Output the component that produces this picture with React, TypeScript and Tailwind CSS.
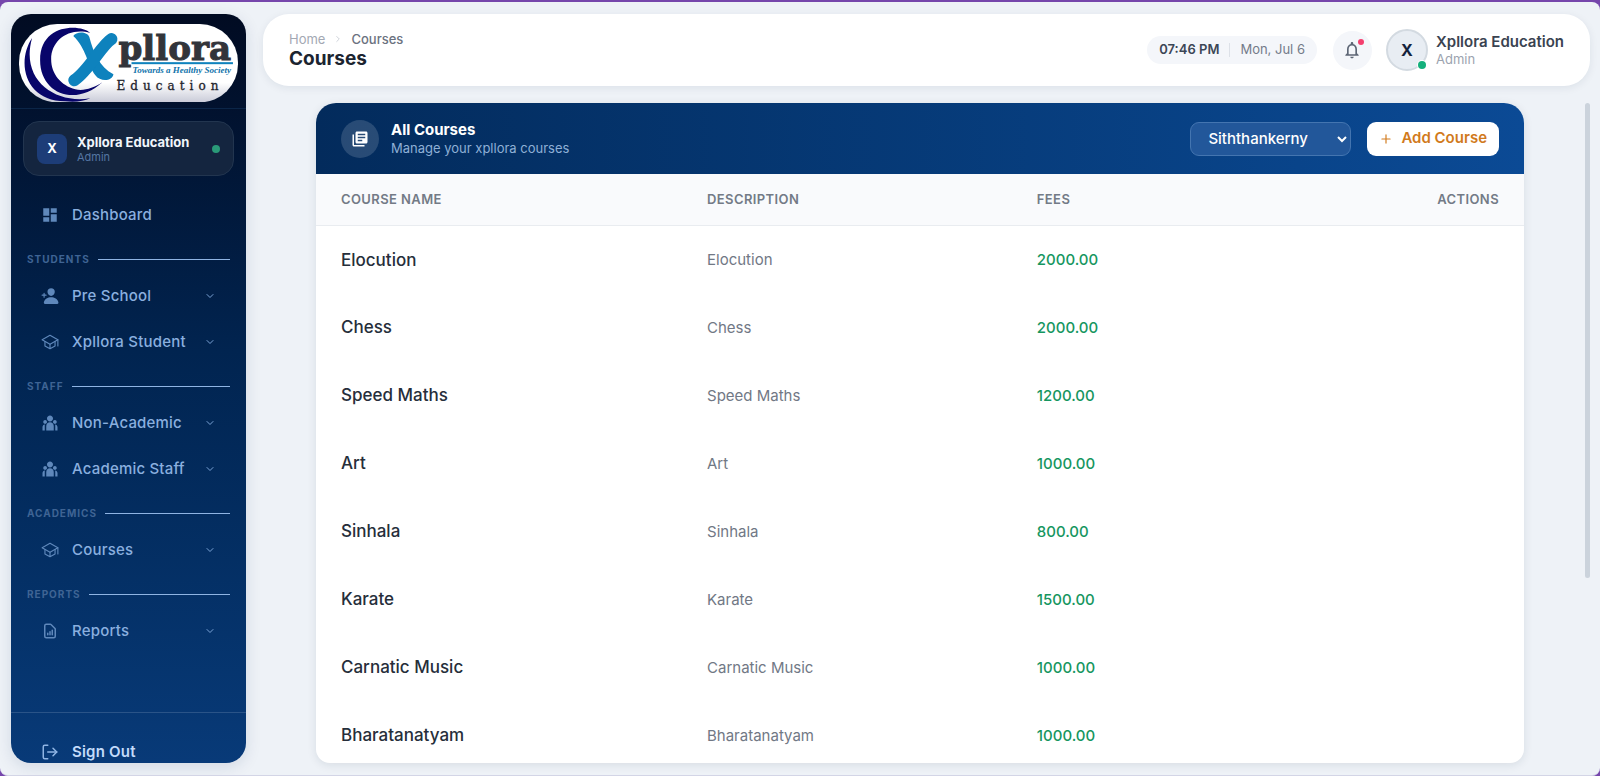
import type { ComponentType } from "react"
import { FiChevronDown, FiChevronRight, FiLogOut, FiPlus } from "react-icons/fi"
import { HiOutlineDocumentReport } from "react-icons/hi"
import { IoPersonAdd, IoSchoolOutline } from "react-icons/io5"
import { MdDashboard, MdLibraryBooks, MdNotificationsNone } from "react-icons/md"
import { RiTeamFill } from "react-icons/ri"

type NavItem = {
  label: string
  icon: ComponentType<{ className?: string }>
}

const navGroups: { title: string; items: NavItem[] }[] = [
  {
    title: "Students",
    items: [
      { label: "Pre School", icon: IoPersonAdd },
      { label: "Xpllora Student", icon: IoSchoolOutline },
    ],
  },
  {
    title: "Staff",
    items: [
      { label: "Non-Academic", icon: RiTeamFill },
      { label: "Academic Staff", icon: RiTeamFill },
    ],
  },
  { title: "Academics", items: [{ label: "Courses", icon: IoSchoolOutline }] },
  { title: "Reports", items: [{ label: "Reports", icon: HiOutlineDocumentReport }] },
]

const courses = [
  { name: "Elocution", description: "Elocution", fees: "2000.00" },
  { name: "Chess", description: "Chess", fees: "2000.00" },
  { name: "Speed Maths", description: "Speed Maths", fees: "1200.00" },
  { name: "Art", description: "Art", fees: "1000.00" },
  { name: "Sinhala", description: "Sinhala", fees: "800.00" },
  { name: "Karate", description: "Karate", fees: "1500.00" },
  { name: "Carnatic Music", description: "Carnatic Music", fees: "1000.00" },
  { name: "Bharatanatyam", description: "Bharatanatyam", fees: "1000.00" },
]

function Logo() {
  return (
    <svg viewBox="0 0 218 78" className="block w-full" role="img" aria-label="Xpllora Education">
      <defs>
        <linearGradient id="pill" x1="0" y1="0" x2="0" y2="1">
          <stop offset="0.75" stopColor="#ffffff" />
          <stop offset="1" stopColor="#c9cbd8" />
        </linearGradient>
      </defs>
      <rect width="218" height="78" rx="38" fill="url(#pill)" />
      <path d="M13 14C-3 38 6 77 46 77C56 78 64 77 71 74C36 80 1 56 13 14Z" fill="#08056a" />
      <path d="M71 9C62 0 21 -1 21 36C21 69 56 83 83 58C74 64 64 67 56 65C42 61 32 50 32 35C32 16 50 3 71 9Z" fill="#08056a" />
      <path d="M54 12C57 7 68 7 70 13C74 28 80 43 94 50C93 57 81 58 76 51C68 41 67 24 54 12Z" fill="#0e82bd" />
      <path d="M92 15C82 21 70 46 55 56" fill="none" stroke="#0e82bd" strokeWidth="12" strokeLinecap="round" />
      <text x="99" y="36" fontSize="34" fontWeight="700" fill="#32343a" stroke="#32343a" strokeWidth="1" className="font-['DejaVu_Serif',serif]">
        pllora
      </text>
      <rect x="112" y="38" width="101" height="2" fill="#0e82bd" />
      <text x="113" y="49" fontSize="9" fontWeight="700" fontStyle="italic" fill="#1274ab" className="font-['Liberation_Serif',serif]">
        Towards a Healthy Society
      </text>
      <text x="97" y="66" fontSize="12" fill="#22242c" stroke="#22242c" strokeWidth="0.3" className="font-['DejaVu_Serif',serif] tracking-[5px]">
        Education
      </text>
    </svg>
  )
}

function NavRow({ item, expandable = true }: { item: NavItem; expandable?: boolean }) {
  const Icon = item.icon
  return (
    <button type="button" className="flex h-[46px] w-full items-center gap-[13px] px-3.5 text-left">
      <Icon className="size-[18px] shrink-0 text-[#5f88bb]" />
      <span className="flex-1 text-[15px] font-medium tracking-[0.2px] text-[#8aafdf]">{item.label}</span>
      {expandable && <FiChevronDown className="size-3 text-[#7ba3d6]" />}
    </button>
  )
}

function Sidebar() {
  return (
    <aside className="flex w-[235px] shrink-0 flex-col overflow-hidden rounded-[20px] bg-linear-to-b from-[#010b22] via-[#012450] via-45% to-[#083a78] shadow-[0_4px_16px_rgba(15,40,90,0.12)]">
      <div className="border-b border-[#0b2548] px-2 pt-[10px] pb-[6px]">
        <Logo />
      </div>

      <div className="mx-3 mt-3 flex h-[55px] shrink-0 items-center gap-2.5 rounded-[16px] border border-[#22354f] bg-[#14253f] px-[13px]">
        <div className="flex size-[30px] items-center justify-center rounded-lg bg-[#1d3d78] text-[13px] font-bold text-white">X</div>
        <div className="min-w-0 flex-1">
          <div className="text-[13px] leading-4 font-bold whitespace-nowrap text-[#f1f5fb]">Xpllora Education</div>
          <div className="text-[11px] leading-[14px] text-[#5576a3]">Admin</div>
        </div>
        <span className="size-2 rounded-full bg-[#2a9a78]" />
      </div>

      <nav className="flex-1 px-4 pt-4">
        <NavRow item={{ label: "Dashboard", icon: MdDashboard }} expandable={false} />
        {navGroups.map((group) => (
          <div key={group.title}>
            <div className="flex items-center gap-2 pt-4 pb-2">
              <h2 className="text-[10px] leading-[11px] font-bold tracking-[1px] text-[#3f6494] uppercase">{group.title}</h2>
              <span className="h-px flex-1 bg-[#8fb4e3]" />
            </div>
            {group.items.map((item) => (
              <NavRow key={item.label} item={item} />
            ))}
          </div>
        ))}
      </nav>

      <div className="h-[51px] shrink-0 border-t border-[#2a5488] px-4 pt-4">
        <button type="button" className="flex h-[46px] w-full items-center gap-[13px] px-3.5 text-left">
          <FiLogOut className="size-[18px] text-[#8fb4e3]" />
          <span className="text-[15px] font-semibold tracking-[0.2px] text-[#c3dbfa]">Sign Out</span>
        </button>
      </div>
    </aside>
  )
}

function Header() {
  return (
    <header className="flex h-[72px] shrink-0 items-center justify-between rounded-[26px] bg-white px-[26px] shadow-[0_2px_8px_rgba(15,40,60,0.08)]">
      <div>
        <nav aria-label="Breadcrumb" className="flex items-center gap-2 text-[13px] leading-[18px]">
          <a href="#home" className="text-[#a3a8b3]">Home</a>
          <FiChevronRight className="size-2.5 text-[#c5cad3]" />
          <span className="font-medium text-[#6b7280]">Courses</span>
        </nav>
        <h1 className="text-[19px] leading-[22px] font-bold text-[#1b2430]">Courses</h1>
      </div>

      <div className="flex items-center">
        <div className="flex h-7 items-center rounded-full bg-[#f4f6fa] px-3 text-[13px]">
          <span className="font-semibold text-[#3c4656]">07:46 PM</span>
          <span className="mx-2.5 h-3.5 w-px bg-[#dde1e8]" />
          <span className="text-[#737b89]">Mon, Jul 6</span>
        </div>
        <button type="button" aria-label="Notifications" className="relative ml-4 flex size-[39px] items-center justify-center rounded-full bg-[#f4f6fa]">
          <MdNotificationsNone className="size-5 text-[#5d6675]" />
          <span className="absolute top-2 right-2 size-[6px] rounded-full bg-[#f43f6e]" />
        </button>
        <div className="relative ml-3.5 flex size-[42px] items-center justify-center rounded-full border-2 border-[#d3dae1] bg-[#e8edf3] text-base font-bold text-[#14233c]">
          X
          <span className="absolute right-0 bottom-0 size-2 rounded-full bg-[#14b07c] ring-1 ring-white" />
        </div>
        <div className="ml-2">
          <div className="text-[15px] leading-[18px] font-semibold text-[#3a4351]">Xpllora Education</div>
          <div className="text-[13px] leading-4 text-[#9ca3af]">Admin</div>
        </div>
      </div>
    </header>
  )
}

function CoursesCard() {
  return (
    <section className="flex-1 overflow-hidden rounded-t-[20px] rounded-b-[14px] bg-white shadow-[0_2px_10px_rgba(15,40,60,0.1)]">
      <div className="flex h-[71px] items-center justify-between bg-linear-to-r from-[#032b5c] to-[#0b4a95] px-[25px]">
        <div className="flex items-center gap-3">
          <div className="flex size-[38px] items-center justify-center rounded-full bg-white/15">
            <MdLibraryBooks className="size-[18px] text-white" />
          </div>
          <div>
            <h2 className="text-[15px] leading-[18px] font-bold text-white">All Courses</h2>
            <p className="text-[13px] leading-[18px] text-[#8fb0d6]">Manage your xpllora courses</p>
          </div>
        </div>
        <div className="flex items-center gap-4">
          <select
            aria-label="Branch"
            className="h-[34px] w-[161px] rounded-[9px] border border-[#4475b0] bg-[#22579a] pl-[13px] text-[15px] font-medium text-white"
          >
            <option>Siththankerny</option>
          </select>
          <button type="button" className="flex h-[34px] items-center gap-2 rounded-[9px] bg-white px-3 text-[15px] font-semibold text-[#d17a1c]">
            <FiPlus className="size-3.5" />
            Add Course
          </button>
        </div>
      </div>

      <table className="w-full table-fixed text-left">
        <thead>
          <tr className="h-[51px] border-b border-[#e9ecf0] bg-[#f9fafc] text-[13px] tracking-[0.4px] text-[#737a86] uppercase">
            <th className="w-[30.3%] px-[25px] font-semibold">Course Name</th>
            <th className="w-[27.3%] px-[25px] font-semibold">Description</th>
            <th className="px-[25px] font-semibold">Fees</th>
            <th className="px-[25px] text-right font-semibold">Actions</th>
          </tr>
        </thead>
        <tbody>
          {courses.map((course) => (
            <tr key={course.name} className="h-[68px]">
              <td className="px-[25px] pt-0.5 text-[17px] font-medium text-[#262e3a]">{course.name}</td>
              <td className="px-[25px] pt-0.5 text-[15px] text-[#717885]">{course.description}</td>
              <td className="px-[25px] pt-0.5 text-[15px] font-medium text-[#16965f]">{course.fees}</td>
              <td className="px-[25px]" />
            </tr>
          ))}
        </tbody>
      </table>
    </section>
  )
}

export default function App() {
  return (
    <div className="h-screen bg-[#7646ac] pt-0.5 font-['Inter',sans-serif]">
      <div className="flex h-full gap-[17px] overflow-hidden rounded-lg border-b border-[#d3d5e6] bg-[#eef2f7] pt-3 pr-2.5 pb-3 pl-[11px]">
        <Sidebar />
        <div className="flex min-w-0 flex-1 flex-col gap-[17px]">
          <Header />
          <main className="flex min-h-0 flex-1">
            <div className="flex min-w-0 flex-1 pr-[61px] pl-[53px]">
              <CoursesCard />
            </div>
            <div className="h-[72%] w-[5px] shrink-0 rounded-full bg-[#cbd3dc]" />
          </main>
        </div>
      </div>
    </div>
  )
}
